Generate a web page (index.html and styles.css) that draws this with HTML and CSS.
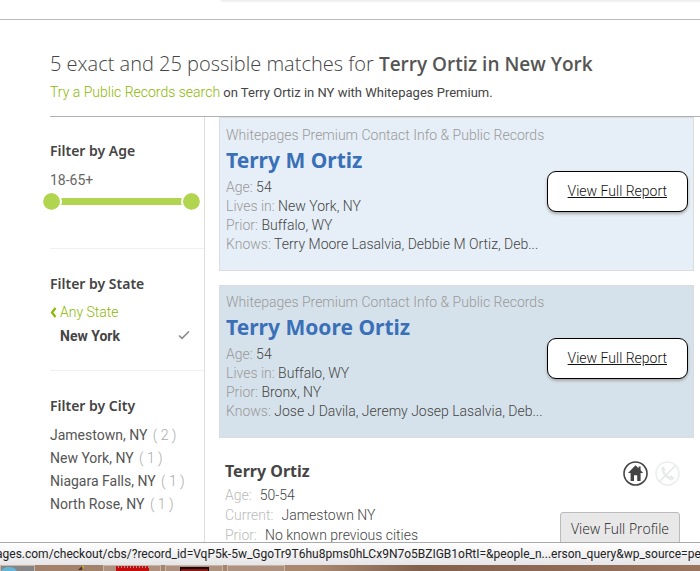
FILE: index.html
```html
<!DOCTYPE html>
<html lang="en">
<head>
<meta charset="utf-8">
<title>Terry Ortiz in New York</title>
<link rel="stylesheet" href="styles.css">
</head>
<body>
<div class="page">
  <header class="topbar"><div class="search-panel"></div></header>
  <div class="intro">
    <h1>5 exact and 25 possible matches for <strong>Terry Ortiz in New York</strong></h1>
    <p><a href="#">Try a Public Records search</a> on Terry Ortiz in NY with Whitepages Premium.</p>
  </div>
  <div class="columns">
    <aside class="filters">
      <section class="filter">
        <h2>Filter by Age</h2>
        <div class="age-value">18-65+</div>
        <div class="slider">
          <input type="range" min="18" max="65" value="18" aria-label="Minimum age">
          <input type="range" min="18" max="65" value="65" aria-label="Maximum age">
        </div>
      </section>
      <section class="filter state">
        <h2>Filter by State</h2>
        <a class="any" href="#"><svg width="7" height="11" viewBox="0 0 7 11"><path d="M5.5 1 L2 5.5 L5.5 10" fill="none" stroke="#8cb800" stroke-width="2.2"/></svg>Any State</a>
        <div class="chosen"><span>New York</span><svg width="12" height="10" viewBox="0 0 12 10"><path d="M1 4.5 L4 7.3 L11 0.5" fill="none" stroke="#8c8c8c" stroke-width="1.6"/></svg></div>
      </section>
      <section class="filter">
        <h2>Filter by City</h2>
        <ul>
          <li><a href="#">Jamestown, NY</a> <span>( 2 )</span></li>
          <li><a href="#">New York, NY</a> <span>( 1 )</span></li>
          <li><a href="#">Niagara Falls, NY</a> <span>( 1 )</span></li>
          <li><a href="#">North Rose, NY</a> <span>( 1 )</span></li>
        </ul>
      </section>
    </aside>
    <main class="results">
      <article class="card">
        <div class="details">
          <p class="promo">Whitepages Premium Contact Info &amp; Public Records</p>
          <h3>Terry M Ortiz</h3>
          <p><span>Age:</span> 54</p>
          <p><span>Lives in:</span> New York, NY</p>
          <p><span>Prior:</span> Buffalo, WY</p>
          <p><span>Knows:</span> Terry Moore Lasalvia, Debbie M Ortiz, Deb...</p>
        </div>
        <a class="report" href="#">View Full Report</a>
      </article>
      <article class="card darker">
        <div class="details">
          <p class="promo">Whitepages Premium Contact Info &amp; Public Records</p>
          <h3>Terry Moore Ortiz</h3>
          <p><span>Age:</span> 54</p>
          <p><span>Lives in:</span> Buffalo, WY</p>
          <p><span>Prior:</span> Bronx, NY</p>
          <p><span>Knows:</span> Jose J Davila, Jeremy Josep Lasalvia, Deb...</p>
        </div>
        <a class="report" href="#">View Full Report</a>
      </article>
      <article class="plain">
        <div class="facts">
          <h3>Terry Ortiz</h3>
          <p><span>Age:</span>50-54</p>
          <p><span>Current:</span>Jamestown NY</p>
          <p><span>Prior:</span>No known previous cities</p>
        </div>
        <div class="actions">
          <div class="icons">
            <svg width="25" height="25" viewBox="0 0 25 25"><circle cx="12.5" cy="12.5" r="11.5" fill="#fff" stroke="#444" stroke-width="1.6"/><path d="M12.5 4.2 L15.6 7.2 V5.5 H17.6 V9.2 L20.2 12 H17.6 V20 H14.2 V14.2 H11 V20 H7.6 V12 H5 Z" fill="#444"/></svg>
            <svg width="25" height="25" viewBox="0 0 25 25"><circle cx="12.5" cy="12.5" r="11.5" fill="#fff" stroke="#eceeee" stroke-width="1.6"/><path d="M6.2 6.6 L8.4 5.3 L10.8 8.8 L9.4 10.6 Q11 13.8 14.2 15.6 L16 14.2 L19.4 16.8 L18 19 Q15.8 20.4 11.5 17 Q6 12.5 6.2 6.6 Z" fill="#e8ebeb"/><path d="M20.6 4.4 L4.4 20.6" stroke="#e8ebeb" stroke-width="1.6"/></svg>
          </div>
          <button type="button">View Full Profile</button>
        </div>
      </article>
    </main>
  </div>
</div>
<div class="status">ages.com/checkout/cbs/?record_id=VqP5k-5w_GgoTr9T6hu8pms0hLCx9N7o5BZIGB1oRtI=&amp;people_n...erson_query&amp;wp_source=pers</div>
<footer class="taskbar">
  <div class="task start"><svg width="16" height="5" viewBox="0 0 16 5"><ellipse cx="8" cy="6" rx="8" ry="5" fill="#63b4d8"/></svg></div>
  <div class="task bare"><svg width="12" height="5" viewBox="0 0 12 5"><path d="M4 5 L7 2 L9 1 L8 5" fill="#493729"/><path d="M8 1 L10 1 L9 4" fill="#e4bb20"/></svg></div>
  <div class="task"><svg width="33" height="5" viewBox="0 0 33 5"><path d="M0 2 H33 V5 H0 Z" fill="#c40c0c"/><path d="M1 0 V3 M4 0 V3 M7 0 V3 M10 0 V3 M13 0 V3 M16 0 V3 M19 0 V3 M22 0 V3 M25 0 V3 M28 0 V3 M31 0 V3" stroke="#c40c0c" stroke-width="2"/></svg></div>
  <div class="task"><svg width="29" height="5" viewBox="0 0 29 5"><path d="M0 1 H29 V5 H0 Z" fill="#160606"/><path d="M1 3 H28 V5 H1 Z" fill="#8f1414"/></svg></div>
  <div class="task"></div>
</footer>
</body>
</html>
```
FILE: styles.css
```css
* { box-sizing: border-box; }
body {
  margin: 0;
  height: 100vh;
  display: flex;
  flex-direction: column;
  overflow: hidden;
  background: #fff;
  color: #444;
  font: 300 14px/19px Roboto, sans-serif;
}
h1, h2, h3, p, ul { margin: 0; padding: 0; }
h1, h2, h3 { font-family: "Noto Sans", "Open Sans", sans-serif; }
a { color: #8cb800; text-decoration: none; }
.page {
  flex: 1;
  min-height: 0;
  overflow: hidden;
  display: flex;
  flex-direction: column;
}
.topbar { flex: none; height: 20px; border-bottom: 1px solid #b8b8b8; }
.search-panel { height: 0; margin-left: 222px; box-shadow: 0 0 3px 1px #ddd; }
.intro {
  flex: none;
  margin-left: 50px;
  padding: 29px 0 14px;
  border-bottom: 1px solid #b0b0b0;
}
h1 {
  font-family: "Open Sans", sans-serif;
  font-size: 20px;
  line-height: 30px;
  font-weight: 300;
  color: #444;
  white-space: nowrap;
}
h1 strong { font-size: 19px; font-weight: 600; color: #555; }
.intro p { padding-top: 4px; font-size: 13px; font-weight: 400; white-space: nowrap; }
.intro p a { font-size: 14px; font-weight: 300; }
.columns { flex: 1; display: flex; min-height: 0; padding-left: 50px; }
.filters { flex: none; width: 155px; border-right: 1px solid #ddd; }
.filter { padding-top: 24px; height: 132px; border-bottom: 1px solid #f0f0f0; }
.filter.state { height: 122px; }
.filter + .filter { padding-top: 25px; }
.filter:last-child { height: auto; border: 0; }
h2 { font-size: 14px; line-height: 20px; font-weight: 600; }
.age-value { margin-top: 9px; line-height: 20px; font-weight: 400; color: #666; }
.slider { display: grid; width: 161px; margin: 1px 0 0 -9px; position: relative; z-index: 1; }
.slider input {
  grid-area: 1 / 1;
  appearance: none;
  width: 100%;
  height: 21px;
  margin: 0;
  background: none;
  pointer-events: none;
}
.slider input:first-child { background: linear-gradient(#b2d550, #b2d550) center / 141px 7px no-repeat; }
.slider input::-webkit-slider-thumb {
  appearance: none;
  pointer-events: auto;
  width: 21px;
  height: 21px;
  border: 2px solid #fff;
  border-radius: 50%;
  background: #b2d550;
  background-clip: padding-box;
}
.any { display: flex; align-items: center; gap: 3px; margin-top: 8px; line-height: 20px; }
.chosen {
  display: flex;
  justify-content: space-between;
  align-items: center;
  padding: 0 14px 0 10px;
  margin-top: 4px;
  line-height: 20px;
  font-weight: 700;
}
.filter ul { list-style: none; margin-top: 8px; line-height: 23px; }
.filter li a { color: #555; font-weight: 400; }
.filter li span { margin-left: 2px; color: #aaa; }
.results { flex: 1; min-width: 0; padding: 0 6px 0 14px; }
.card {
  display: flex;
  justify-content: space-between;
  align-items: center;
  padding: 0 5px 0 6px;
  height: 154px;
  margin-bottom: 14px;
  background: #e6eff7;
  border: 1px solid #dadcde;
}
.card.darker { height: 153px; background: #d6e2eb; }
.details { padding-bottom: 9px; white-space: nowrap; }
.card h3 { font-size: 21px; line-height: 30px; margin-bottom: 3px; font-weight: 700; color: #3a70b8; }
.details span, .details .promo { color: #999; }
.report {
  flex: none;
  padding: 10px 20px;
  border: 1px solid #000;
  border-radius: 9px;
  background: #fff;
  color: #111;
  text-decoration: underline;
  box-shadow: 0 2px 3px #aaa;
}
.card .report { margin-bottom: 6px; }
.plain { display: flex; justify-content: space-between; padding: 7px 14px 0 6px; }
.plain h3 { font-size: 16px; line-height: 24px; font-weight: 700; margin-bottom: 2px; }
.facts p { line-height: 20px; }
.facts span { margin-right: 8px; color: #bbb; }
.actions { display: flex; flex-direction: column; align-items: flex-end; gap: 26px; padding-top: 2px; }
.icons { display: flex; gap: 7px; height: 25px; }
button {
  height: 33px;
  padding: 0 10px;
  font: 300 14px "Open Sans", sans-serif;
  color: #222;
  border: 1px solid #bbb;
  border-radius: 3px;
  background: #e8e8e8;
  white-space: nowrap;
}
.status {
  flex: none;
  height: 23px;
  overflow: hidden;
  white-space: nowrap;
  text-indent: -4px;
  border-top: 1px solid #aaa;
  background: linear-gradient(#fff, #e5e5e8);
  color: #222;
  font: 400 12px/22px Roboto, sans-serif;
}
.taskbar {
  flex: none;
  display: flex;
  gap: 4px;
  height: 6px;
  overflow: hidden;
  background: linear-gradient(90deg, #a08069, #a98870 45%, #83604c 60%, #99745e);
}
.task {
  width: 58px;
  display: flex;
  justify-content: center;
  border: 1px solid #cbb5a5;
  border-bottom: 0;
  background: #ae927f;
}
.task.start { width: 35px; margin-right: 2px; justify-content: flex-start; background: #858585; }
.task.bare { border: 0; background: none; padding-left: 20px; }
```
